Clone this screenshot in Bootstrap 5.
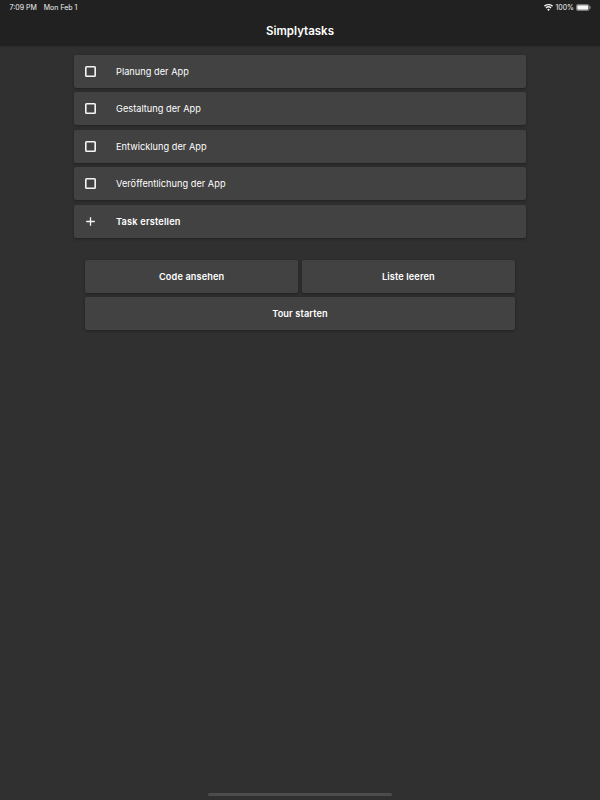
<!DOCTYPE html>
<html lang="de">
<head>
	<meta charset="UTF-8">
	<meta name="viewport" content="width=device-width, initial-scale=1.0">
	<title>Simplytasks</title>
	<link href="https://cdn.jsdelivr.net/npm/bootstrap@5.3.0/dist/css/bootstrap.min.css" rel="stylesheet">
	<style>
		html, body { height: 100%; }
		body { background: #303030; font-family: Inter, Roboto, "Liberation Sans", sans-serif; color: #fff; }
		.app-shell { width: 600px; height: 800px; overflow: hidden; }
		.top-bar { height: 46px; background: #212121; box-shadow: 0 1px 2px rgba(0,0,0,.12); padding-top: 3.500px; }
		.status-row { height: 8px; padding: 0 9px 0 9.5px; font-size: 7px; line-height: 8px; color: #f2f2f2; }
		.status-left { gap: 7px; }
		.status-right { gap: 2px; }
		.app-title { font-size: 11.500px; font-weight: 600; line-height: 14px; margin-top: 12px; }
		.task-list { width: 452px; margin: 8.900px auto 0; gap: 4.5px; }
		.task-row { height: 33px; background: #424242; border-radius: 2px; box-shadow: 0 1px 3px rgba(0,0,0,.35); font-size: 9.200px; padding-left: 11px; }
		.task-check { width: 11px; height: 11px; flex: none; }
		.task-plus { width: 11px; height: 11px; flex: none; }
		.task-label { margin-left: 20px; padding-top: 1px; letter-spacing: .03px; }
		.task-strong { font-weight: 600; letter-spacing: .2px; }
		.action-grid { width: 429.5px; margin: 22px auto 0; gap: 4.5px; }
		.action-btn { height: 33px; background: #424242; border: 0; border-radius: 2px; color: #fff; font-size: 9.200px; font-weight: 600; letter-spacing: .12px; box-shadow: 0 1px 3px rgba(0,0,0,.35); padding: 1px 0 0; }
		.home-bar { position: absolute; left: 208px; bottom: 4px; width: 184px; height: 3px; border-radius: 2px; background: #4d4d4d; }
	</style>
</head>
<body>
	<div class="app-shell position-relative">
		<header class="top-bar">
			<div class="status-row d-flex justify-content-between align-items-center">
				<div class="d-flex status-left"><span>7:09 PM</span><span>Mon Feb 1</span></div>
				<div class="d-flex align-items-center status-right">
					<svg width="9" height="7" viewBox="0 0 18 14" fill="#f2f2f2"><path d="M9 14 6.4 10.8a4 4 0 0 1 5.2 0zM4.8 8.9 3 6.8a9.2 9.2 0 0 1 12 0l-1.800 2.100a6.500 6.500 0 0 0-8.400 0zM1.800 5.300 0 3.200a14 14 0 0 1 18 0l-1.800 2.100a11.300 11.300 0 0 0-14.400 0z"/></svg>
					<span>100%</span>
					<svg width="15" height="7" viewBox="0 0 15 7"><rect x=".4" y=".4" width="12.700" height="6.200" rx="1.600" fill="none" stroke="#9a9a9a" stroke-width=".8"/><rect x="1.200" y="1.200" width="11.100" height="4.600" rx="1" fill="#f5f5f5"/><rect x="13.600" y="2.300" width="1" height="2.400" rx=".5" fill="#9a9a9a"/></svg>
				</div>
			</div>
			<div class="app-title text-center">Simplytasks</div>
		</header>

		<div class="task-list d-flex flex-column">
			<div class="task-row d-flex align-items-center"><svg class="task-check" viewBox="0 0 11 11"><rect x=".8" y=".8" width="9.400" height="9.400" rx=".8" fill="none" stroke="#f5f5f5" stroke-width="1.600"/></svg><span class="task-label">Planung der App</span></div>
			<div class="task-row d-flex align-items-center"><svg class="task-check" viewBox="0 0 11 11"><rect x=".8" y=".8" width="9.400" height="9.400" rx=".8" fill="none" stroke="#f5f5f5" stroke-width="1.600"/></svg><span class="task-label">Gestaltung der App</span></div>
			<div class="task-row d-flex align-items-center"><svg class="task-check" viewBox="0 0 11 11"><rect x=".8" y=".8" width="9.400" height="9.400" rx=".8" fill="none" stroke="#f5f5f5" stroke-width="1.600"/></svg><span class="task-label">Entwicklung der App</span></div>
			<div class="task-row d-flex align-items-center"><svg class="task-check" viewBox="0 0 11 11"><rect x=".8" y=".8" width="9.400" height="9.400" rx=".8" fill="none" stroke="#f5f5f5" stroke-width="1.600"/></svg><span class="task-label">Veröffentlichung der App</span></div>
			<div class="task-row d-flex align-items-center">
				<svg class="task-plus" viewBox="0 0 11 11"><path d="M5.500 1.200v8.600M1.200 5.500h8.600" stroke="#f5f5f5" stroke-width="1.300" fill="none"/></svg>
				<span class="task-label task-strong">Task erstellen</span>
			</div>
		</div>

		<div class="action-grid d-flex flex-column">
			<div class="d-flex gap-1">
				<button class="action-btn flex-fill w-50">Code ansehen</button>
				<button class="action-btn flex-fill w-50">Liste leeren</button>
			</div>
			<button class="action-btn">Tour starten</button>
		</div>

		<div class="home-bar"></div>
	</div>

	<script src="https://cdn.jsdelivr.net/npm/bootstrap@5.3.0/dist/js/bootstrap.bundle.min.js"></script>
</body>
</html>
